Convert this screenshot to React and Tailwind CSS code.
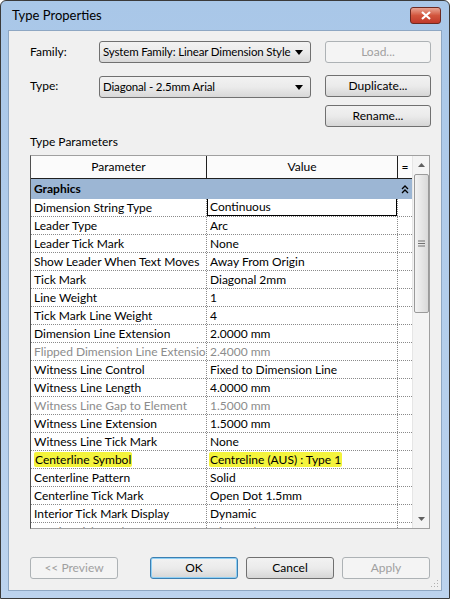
import React from 'react';

const rows = [
  ['Dimension String Type', 'Continuous', false, 'edit'],
  ['Leader Type', 'Arc'],
  ['Leader Tick Mark', 'None'],
  ['Show Leader When Text Moves', 'Away From Origin'],
  ['Tick Mark', 'Diagonal 2mm'],
  ['Line Weight', '1'],
  ['Tick Mark Line Weight', '4'],
  ['Dimension Line Extension', '2.0000 mm'],
  ['Flipped Dimension Line Extension', '2.4000 mm', true],
  ['Witness Line Control', 'Fixed to Dimension Line'],
  ['Witness Line Length', '4.0000 mm'],
  ['Witness Line Gap to Element', '1.5000 mm', true],
  ['Witness Line Extension', '1.5000 mm'],
  ['Witness Line Tick Mark', 'None'],
  ['Centerline Symbol', 'Centreline (AUS) : Type 1', false, 'mark'],
  ['Centerline Pattern', 'Solid'],
  ['Centerline Tick Mark', 'Open Dot 1.5mm'],
  ['Interior Tick Mark Display', 'Dynamic'],
  ['Interior Tick Mark', 'Diagonal 2mm', true],
];

function Caret() {
  return (
    <svg width="8" height="5" viewBox="0 0 8 5" className="shrink-0">
      <path d="M0 0h8L4 5z" fill="#000" />
    </svg>
  );
}

function Combo({ text }) {
  return (
    <div className="w-[212px] h-[22px] border border-[#707070] rounded-[3px] bg-gradient-to-b from-[#f2f2f2] via-[#ebebeb] to-[#d8d8d8] flex items-center pl-[3px] pr-[7px]">
      <span className="flex-1 whitespace-nowrap overflow-hidden text-[11.5px] tracking-[-0.15px]">{text}</span>
      <Caret />
    </div>
  );
}

function Btn({ children, disabled, primary, w = 'w-[106px]' }) {
  return (
    <div
      className={
        `${w} h-[22px] rounded-[3px] flex items-center justify-center border ` +
        (disabled
          ? 'border-[#adb2b5] bg-[#f4f4f4] text-[#a0a0a0]'
          : primary
          ? 'border-[#3c7fb1] bg-gradient-to-b from-[#f2f2f2] via-[#ebebeb] to-[#d6d6d6] shadow-[inset_0_0_0_1px_#8fd0f5]'
          : 'border-[#707070] bg-gradient-to-b from-[#f2f2f2] via-[#ebebeb] to-[#d6d6d6]')
      }
    >
      {children}
    </div>
  );
}

export default function App() {
  return (
    <div className="w-[450px] h-[599px] bg-gradient-to-b from-[#a9c7e8] to-[#bcd3ee] border border-[#3a3a3a] rounded-t-[6px] flex flex-col font-['Lato','Noto_Sans',sans-serif] text-[12px] text-black overflow-hidden">
      {/* title bar */}
      <div className="h-[29px] shrink-0 flex items-center pl-[11px] pr-[8px]">
        <span className="flex-1 text-[13px] pt-[1px]">Type Properties</span>
        <div className="w-[31px] h-[17px] rounded-[3px] border border-[#6d2a22] bg-gradient-to-b from-[#e8a493] via-[#d2553d] to-[#c0392b] flex items-center justify-center">
          <svg width="10" height="9" viewBox="0 0 10 9">
            <path d="M1 1l8 7M9 1L1 8" stroke="#fff" strokeWidth="2.2" />
          </svg>
        </div>
      </div>

      {/* client area */}
      <div className="flex-1 mx-[7px] mb-[7px] bg-[#f0f0f0] border border-[#8ea7c3] flex flex-col pl-[21px] pt-[10px] relative">
        <div className="flex items-center">
          <span className="w-[69px]">Family:</span>
          <Combo text="System Family: Linear Dimension Style" />
          <div className="ml-[14px]">
            <Btn disabled>Load...</Btn>
          </div>
        </div>
        <div className="flex items-center mt-[10px]">
          <span className="w-[69px]">Type:</span>
          <div className="mt-[3px]">
            <Combo text="Diagonal - 2.5mm Arial" />
          </div>
          <div className="ml-[14px]">
            <Btn>Duplicate...</Btn>
          </div>
        </div>
        <div className="flex mt-[7px] pl-[295px]">
          <Btn>Rename...</Btn>
        </div>

        <div className="mt-[6px] h-[18px] leading-[18px]">Type Parameters</div>

        {/* table */}
        <div className="mt-[4px] w-[400px] h-[374px] border border-[#a0a0a0] border-l-[#505050] bg-white flex overflow-hidden">
          <div className="w-[381px] flex flex-col">
            <div className="h-[23px] shrink-0 flex border-b border-[#202020] bg-[#fbfbfb]">
              <div className="w-[176px] border-r border-[#202020] flex items-center justify-center">Parameter</div>
              <div className="w-[191px] border-r border-[#202020] flex items-center justify-center">Value</div>
              <div className="flex-1 flex items-center justify-center">=</div>
            </div>
            <div className="h-[20px] shrink-0 bg-[#9cb6d4] flex items-center pl-[3px] font-bold">
              <span className="flex-1">Graphics</span>
              <svg width="8" height="9" viewBox="0 0 8 9" className="mr-[3px]">
                <path d="M1 4l3-3 3 3M1 8l3-3 3 3" stroke="#000" strokeWidth="1.3" fill="none" />
              </svg>
            </div>
            {rows.map(([p, v, dim, kind]) => (
              <div key={p} className={`h-[18px] shrink-0 flex border-b border-dotted border-[#8a8a8a] ${dim ? 'text-[#8c8c8c]' : ''}`}>
                <div className="w-[176px] shrink-0 border-r border-dotted border-[#8a8a8a] pl-[3px] whitespace-nowrap overflow-hidden leading-[17px]">
                  {kind === 'mark' ? <span className="bg-[#f4f43c] px-[1px] rounded-[2px]">{p}</span> : p}
                </div>
                <div className="w-[191px] shrink-0 border-r border-dotted border-[#8a8a8a] whitespace-nowrap overflow-hidden leading-[17px]">
                  {kind === 'edit' ? (
                    <div className="h-[18px] -mt-[1px] border border-black pl-[2px] leading-[16px]">{v}</div>
                  ) : kind === 'mark' ? (
                    <span className="ml-[2px] bg-[#f4f43c] px-[1px] rounded-[2px]">{v}</span>
                  ) : (
                    <span className="pl-[3px]">{v}</span>
                  )}
                </div>
                <div className="flex-1" />
              </div>
            ))}
          </div>
          {/* scrollbar */}
          <div className="flex-1 bg-[#f4f4f4] border-l border-[#e6e6e6] flex flex-col items-center">
            <div className="h-[17px] shrink-0 flex items-center justify-center">
              <svg width="7" height="4" viewBox="0 0 7 4"><path d="M0 4h7L3.5 0z" fill="#606060" /></svg>
            </div>
            <div className="mt-[1px] w-[15px] h-[139px] rounded-[2px] border border-[#9a9a9a] bg-gradient-to-r from-[#f3f3f3] to-[#d9d9d9] flex items-center justify-center">
              <svg width="7" height="7" viewBox="0 0 7 7">
                <path d="M0 1h7M0 3.5h7M0 6h7" stroke="#707070" strokeWidth="1" />
              </svg>
            </div>
            <div className="flex-1" />
            <div className="h-[18px] shrink-0 flex items-center justify-center">
              <svg width="7" height="4" viewBox="0 0 7 4"><path d="M0 0h7L3.5 4z" fill="#606060" /></svg>
            </div>
          </div>
        </div>

        {/* bottom buttons */}
        <div className="mt-[28px] flex items-center">
          <Btn disabled w="w-[88px]">&lt;&lt; Preview</Btn>
          <div className="ml-[32px]">
            <Btn primary w="w-[88px]">OK</Btn>
          </div>
          <div className="ml-[8px]">
            <Btn w="w-[88px]">Cancel</Btn>
          </div>
          <div className="ml-[8px]">
            <Btn disabled w="w-[88px]">Apply</Btn>
          </div>
        </div>

        <svg width="8" height="8" viewBox="0 0 8 8" className="absolute right-[2px] bottom-[2px]">
          <rect x="6" y="0" width="1" height="1" fill="#b0b0b0" />
          <rect x="3" y="3" width="1" height="1" fill="#b0b0b0" />
          <rect x="6" y="3" width="1" height="1" fill="#b0b0b0" />
          <rect x="0" y="6" width="1" height="1" fill="#b0b0b0" />
          <rect x="3" y="6" width="1" height="1" fill="#b0b0b0" />
          <rect x="6" y="6" width="1" height="1" fill="#b0b0b0" />
        </svg>
      </div>
    </div>
  );
}
